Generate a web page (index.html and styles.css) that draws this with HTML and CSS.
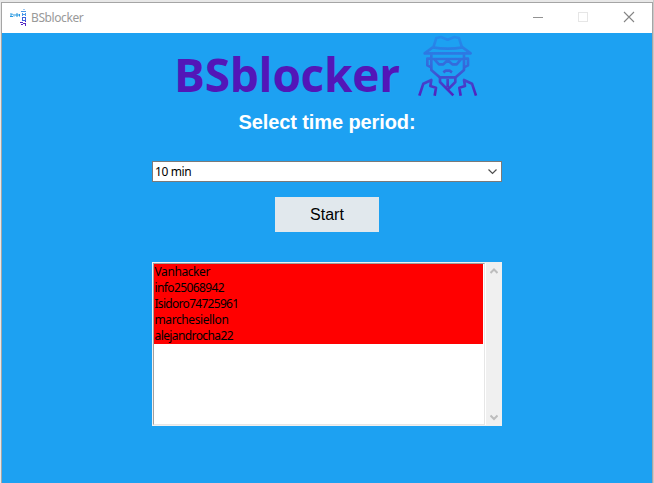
FILE: index.html
```html
<!DOCTYPE html>
<html lang="en">
<head>
<meta charset="utf-8">
<title>BSblocker</title>
<link rel="stylesheet" href="styles.css">
</head>
<body>
<div class="window">
  <header class="titlebar">
    <svg class="app-icon" width="18" height="20" viewBox="0 0 18 20" fill="none">
      <path d="M0 6h2.500L0 8.500h3M4 6v2.500M6 6h2v2H6zM9.500 6v2.500" stroke="#2597e0"/>
      <path d="M13 1.500h2" stroke="#9cc9f2"/>
      <path d="M11 3.500h5M12.500 5v3M15.500 5v3M13 6.500h3" stroke="#4a98e8"/>
      <path d="M12 9.500h4M12.500 10v3M15.500 10v3M13 12.500h3" stroke="#3d63df"/>
      <path d="M10 14.500h3M15 13.500h1M13 15.500h3M15.500 16v2M11 16.500h2" stroke="#5424c4"/>
    </svg>
    <span class="title">BSblocker</span>
    <svg class="controls" width="138" height="30" viewBox="0 0 138 30" fill="none">
      <path d="M19 14.500h10" stroke="#929292"/>
      <rect x="64.500" y="9.500" width="9" height="9" stroke="#e6e6e6"/>
      <path d="M110 9l10 10M120 9l-10 10" stroke="#858585" stroke-width="1.100"/>
    </svg>
  </header>
  <main class="content">
    <div class="brand">
      <span class="logo">BSblocker</span>
      <svg class="spy" width="90" height="75" viewBox="0 0 270 225" fill="none">
        <defs>
          <linearGradient id="ink" gradientUnits="userSpaceOnUse" x1="0" y1="25" x2="0" y2="203">
            <stop offset="0" stop-color="#238ded"/>
            <stop offset=".5" stop-color="#3569db"/>
            <stop offset="1" stop-color="#5420bd"/>
          </linearGradient>
        </defs>
        <g stroke="url(#ink)" stroke-width="8" stroke-linejoin="round">
          <path d="M100 58L109 30L123 27L143 35L163 27L177 30L186 58"/>
          <path d="M98 58L74 76H212L188 58Q143 66 98 58"/>
          <path d="M94 79V126L119 148H167L192 126V79"/>
          <path d="M94 92H82V112L94 118M192 92H204V112L192 118"/>
          <path d="M95 93H191M104 95L117 109H130L143 97L157 109H170L182 95"/>
          <path d="M130 133L137 128H149L156 133"/>
          <path d="M120 148V162L160 202M166 148V162L144 184M143 153V178"/>
          <path d="M58 203L70 167L94 156L91 174L108 179L104 203M228 203L216 167L192 156L195 174L178 179L182 203"/>
        </g>
      </svg>
    </div>
    <h1 class="prompt">Select time period:</h1>
    <div class="combo">
      <span>10 min</span>
      <svg width="11" height="8" viewBox="0 0 11 8" fill="none"><path d="M1.500 1.500l4 4 4-4" stroke="#4e4e4e" stroke-width="1.200"/></svg>
    </div>
    <button class="start">Start</button>
    <div class="list">
      <ul class="items">
        <li class="loose">Vanhacker</li>
        <li>info25068942</li>
        <li class="tight">Isidoro74725961</li>
        <li class="loose">marchesiellon</li>
        <li>alejandrocha22</li>
      </ul>
      <div class="scrollbar">
        <svg width="8" height="7" viewBox="0 0 8 7" fill="none"><path d="M.5 5L4 1.500L7.500 5" stroke="#bdbdbd" stroke-width="2"/></svg>
        <svg width="8" height="7" viewBox="0 0 8 7" fill="none"><path d="M.5 1.500L4 5L7.500 1.500" stroke="#bdbdbd" stroke-width="2"/></svg>
      </div>
    </div>
  </main>
</div>
</body>
</html>
```
FILE: styles.css
```css
* { box-sizing: border-box; }
body {
  margin: 0;
  width: 654px;
  height: 483px;
  padding: 2px 1px 0;
  overflow: hidden;
  background: linear-gradient(to right, #e8e8e8 653px, #c8c8c8 653px);
  font-family: "Noto Sans", sans-serif;
}
.window {
  height: 481px;
  border: 1px solid #a5a5a5;
  border-bottom: 0;
  background: #1da1f2;
}
.titlebar {
  display: flex;
  align-items: center;
  height: 30px;
  padding-left: 8px;
  background: #fff;
}
.app-icon { margin-right: 3px; }
.title {
  font-size: 12px;
  line-height: 16px;
  color: #999;
  letter-spacing: -0.4px;
}
.controls { margin-left: auto; }
.content {
  display: flex;
  flex-direction: column;
  align-items: center;
  height: 450px;
}
.brand {
  display: flex;
  width: 650px;
  height: 70px;
  padding-left: 172px;
}
.logo {
  width: 226px;
  margin-top: 9px;
  font: bold 46px/64px "Open Sans", sans-serif;
  letter-spacing: -0.25px;
  color: #5316b8;
  white-space: nowrap;
}
.spy { margin-top: -5px; }
.prompt {
  margin: 6px 0 0;
  font: bold 20px/26px "Liberation Sans", sans-serif;
  letter-spacing: -0.1px;
  color: #fff;
}
.combo {
  display: flex;
  align-items: center;
  justify-content: space-between;
  width: 350px;
  height: 21px;
  margin-top: 26px;
  padding: 0 3px 0 2px;
  border: 1px solid #7a7a7a;
  background: #fff;
  font-size: 12px;
  letter-spacing: -0.4px;
  color: #000;
}
.start {
  width: 104px;
  height: 35px;
  margin-top: 15px;
  padding: 0;
  border: 0;
  background: #e1e8ed;
  font: 16px/35px "Liberation Sans", sans-serif;
  color: #000;
}
.list {
  display: flex;
  justify-content: space-between;
  width: 350px;
  height: 164px;
  margin-top: 30px;
  border: 1px solid #f0f0f0;
  background: #fff;
}
.items {
  width: 332px;
  margin: 0;
  padding: 0 1px 0 0;
  border: 1px solid #a0a0a0;
  border-right-color: #e6e6e6;
  border-bottom-color: #e6e6e6;
  list-style: none;
  font-size: 12px;
  line-height: 16px;
  letter-spacing: -0.6px;
  color: #000;
}
.items li {
  height: 16px;
  padding-left: 0.5px;
  background: #f00;
  white-space: nowrap;
}
.items .loose { letter-spacing: -0.4px; }
.items .tight { letter-spacing: -0.7px; }
.scrollbar {
  display: flex;
  flex-direction: column;
  align-items: center;
  justify-content: space-between;
  width: 16px;
  margin-right: -1px;
  padding: 5px 1px 4px 0;
  background: #f0f0f0;
}
```
